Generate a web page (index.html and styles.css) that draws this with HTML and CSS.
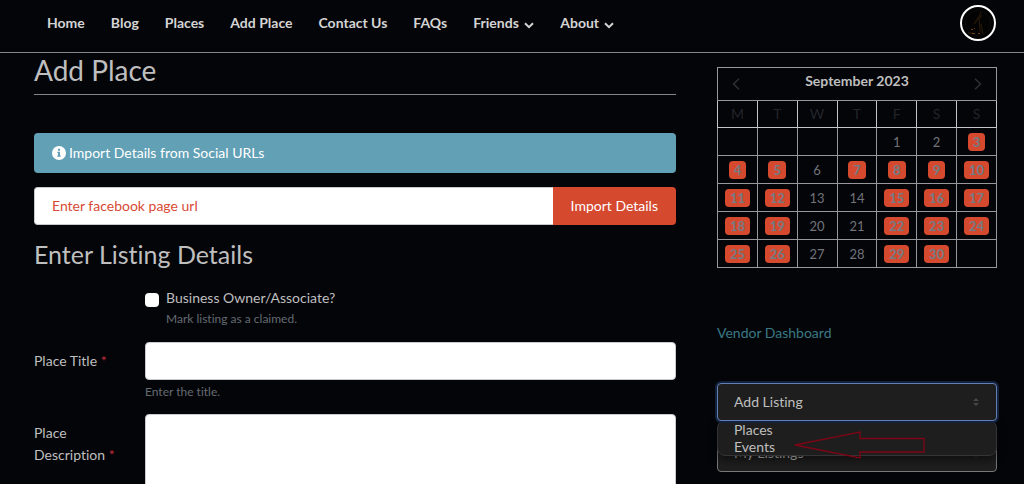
FILE: index.html
```html
<!DOCTYPE html>
<html lang="en">
<head>
<meta charset="utf-8">
<meta name="viewport" content="width=device-width, initial-scale=1">
<title>Add Place</title>
<link rel="stylesheet" href="styles.css">
</head>
<body>
<header class="topbar">
  <nav class="nav" aria-label="Main">
    <a href="#">Home</a>
    <a href="#">Blog</a>
    <a href="#">Places</a>
    <a href="#">Add Place</a>
    <a href="#">Contact Us</a>
    <a href="#">FAQs</a>
    <a href="#">Friends <svg class="chevron" viewBox="0 0 10 7" aria-hidden="true"><path d="M1 1.2 5 5.2 9 1.2"/></svg></a>
    <a href="#">About <svg class="chevron" viewBox="0 0 10 7" aria-hidden="true"><path d="M1 1.2 5 5.2 9 1.2"/></svg></a>
  </nav>
  <a class="avatar" href="#" aria-label="Account">
    <svg viewBox="0 0 32 32" aria-hidden="true">
      <circle cx="16" cy="16" r="12.5" fill="none" stroke="#0d0b0b"/>
      <path d="M19 5l-2 5-5 7M17 10l1 15M20 8l-2 3M19 17l2 10M14 13l3-2M6 26h5" fill="none" stroke="#241608" stroke-width="1.3"/>
      <path d="M9 22h2v1H9zM12 21h1v1h-1zM10 26h3v1h-3zM16 26h2v1h-2z" fill="#76400f"/>
    </svg>
  </a>
</header>
<div class="page">
  <main class="main">
    <h1 class="title">Add Place</h1>
    <div class="notice">
      <svg class="info" viewBox="0 0 14 14" aria-hidden="true"><circle cx="7" cy="7" r="7" fill="#fff"/><path d="M6 2.8h2v1.9H6zM5.3 5.7H8v3.9h.8v1.2H5.2V9.6H6V6.9h-.7z" fill="#62a0b5"/></svg>
      <span>Import Details from Social URLs</span>
    </div>
    <form>
      <div class="import">
        <input class="url" type="text" placeholder="Enter facebook page url" aria-label="Facebook page url">
        <button class="import-button" type="button">Import Details</button>
      </div>
      <h2 class="subtitle">Enter Listing Details</h2>
      <div class="claim">
        <input class="check" type="checkbox" id="owner">
        <div>
          <label for="owner">Business Owner/Associate?</label>
          <p class="hint">Mark listing as a claimed.</p>
        </div>
      </div>
      <div class="field">
        <label class="label" for="place-title">Place Title <span class="required">*</span></label>
        <div>
          <input class="box" type="text" id="place-title">
          <p class="hint">Enter the title.</p>
        </div>
      </div>
      <div class="field">
        <label class="label" for="description">Place Description <span class="required">*</span></label>
        <textarea class="box area" id="description"></textarea>
      </div>
    </form>
  </main>
  <aside class="side">
    <table class="calendar">
      <thead>
        <tr><th class="month" colspan="7"><div class="month-row">
          <button class="arrow" type="button" aria-label="Previous month"><svg viewBox="0 0 8 12" aria-hidden="true"><path d="M7 .7 1.5 6 7 11.3"/></svg></button>
          <span class="month-name">September 2023</span>
          <button class="arrow" type="button" aria-label="Next month"><svg viewBox="0 0 8 12" aria-hidden="true"><path d="M1 .7 6.500 6 1 11.300"/></svg></button>
        </div></th></tr>
        <tr class="days"><th>M</th><th>T</th><th>W</th><th>T</th><th>F</th><th>S</th><th>S</th></tr>
      </thead>
      <tbody>
        <tr><td></td><td></td><td></td><td></td><td>1</td><td>2</td><td><a href="#">3</a></td></tr>
        <tr><td><a href="#">4</a></td><td><a href="#">5</a></td><td>6</td><td><a href="#">7</a></td><td><a href="#">8</a></td><td><a href="#">9</a></td><td><a href="#">10</a></td></tr>
        <tr><td><a href="#">11</a></td><td><a href="#">12</a></td><td>13</td><td>14</td><td><a href="#">15</a></td><td><a href="#">16</a></td><td><a href="#">17</a></td></tr>
        <tr><td><a href="#">18</a></td><td><a href="#">19</a></td><td>20</td><td>21</td><td><a href="#">22</a></td><td><a href="#">23</a></td><td><a href="#">24</a></td></tr>
        <tr><td><a href="#">25</a></td><td><a href="#">26</a></td><td>27</td><td>28</td><td><a href="#">29</a></td><td><a href="#">30</a></td><td></td></tr>
      </tbody>
    </table>
    <a class="vendor" href="#">Vendor Dashboard</a>
    <div class="pickers">
      <div class="picker">
        <select class="select select-open" aria-label="Add Listing"><option>Add Listing</option></select>
        <svg class="sort" viewBox="0 0 6 8" aria-hidden="true"><path d="M3 0 6 3H0zM0 5h6L3 8z"/></svg>
        <ul class="menu">
          <li><a href="#">Places</a></li>
          <li><a href="#">Events</a></li>
        </ul>
        <svg class="pointer" viewBox="0 0 132 28" aria-hidden="true"><path d="M1 14 66 1v6.500h64v13.500H66V27z"/></svg>
      </div>
      <div class="picker">
        <select class="select" aria-label="My Listings"><option>My Listings</option></select>
        <svg class="sort" viewBox="0 0 6 8" aria-hidden="true"><path d="M3 0 6 3H0zM0 5h6L3 8z"/></svg>
      </div>
    </div>
  </aside>
</div>
</body>
</html>
```
FILE: styles.css
```css
* { box-sizing: border-box; }

body {
  margin: 0;
  height: 100vh;
  overflow: hidden;
  background: #040509;
  color: #bfbfbf;
  font: 14px/22px Lato, "Liberation Sans", sans-serif;
  font-variant-ligatures: none;
}

a { color: inherit; text-decoration: none; }
h1, h2, p, ul { margin: 0; padding: 0; font-weight: 400; }
input, select, button, textarea { font: inherit; margin: 0; }

.topbar {
  display: flex;
  align-items: center;
  justify-content: space-between;
  height: 53px;
  padding: 0 28px 6px 47px;
  border-bottom: 1px solid #85868a;
}
.nav { display: flex; gap: 26px; font-weight: 700; color: #d4d4d4; }
.nav a { white-space: nowrap; }
.chevron {
  width: 10px;
  height: 7px;
  margin-left: 2px;
  vertical-align: -1px;
  fill: none;
  stroke: currentColor;
  stroke-width: 2;
}
.avatar {
  width: 36px;
  height: 36px;
  border: 2px solid #fff;
  border-radius: 50%;
  background: #030304;
}
.avatar svg { display: block; }

.page {
  display: grid;
  grid-template-columns: minmax(0, 1fr) 280px;
  gap: 41px;
  padding: 0 27px 0 34px;
}

.title {
  padding-bottom: 7px;
  margin-bottom: 38px;
  border-bottom: 1px solid #85868a;
  font-size: 28px;
  line-height: 34px;
}
.notice {
  display: flex;
  align-items: center;
  gap: 3px;
  height: 40px;
  margin-bottom: 14px;
  padding: 0 18px;
  border-radius: 4px;
  background: #62a0b5;
  color: #fff;
}
.info { width: 14px; height: 14px; }
.import { display: flex; height: 38px; }
.url {
  flex: 1;
  min-width: 0;
  padding: 0 17px;
  border: 1px solid #c8cacd;
  border-right: 0;
  border-radius: 4px 0 0 4px;
  background: #fff;
}
.url::placeholder { color: #d84a35; opacity: 1; }
.import-button {
  padding: 0 18px;
  border: 0;
  border-radius: 0 4px 4px 0;
  background: #d5492f;
  color: #fff;
}
.subtitle { margin: 14px 0 18px; font-size: 25px; line-height: 30px; }

.claim { display: flex; gap: 7px; margin: 0 0 13px 111px; }
.check {
  appearance: none;
  width: 14px;
  height: 14px;
  margin-top: 6px;
  border-radius: 4px;
  background: #fff;
}
.hint { font-size: 12px; line-height: 20px; color: #646b72; }
.field {
  display: grid;
  grid-template-columns: 96px minmax(0, 1fr);
  gap: 15px;
  margin-bottom: 12px;
}
.label { padding-top: 8px; }
.required { color: #c52b38; }
.box {
  display: block;
  width: 100%;
  height: 38px;
  margin-bottom: 2px;
  border: 1px solid #c8cacd;
  border-radius: 4px;
  background: #fff;
}
.area { height: 150px; resize: none; }

.calendar {
  width: 100%;
  margin-top: 14px;
  border-collapse: collapse;
  table-layout: fixed;
  text-align: center;
  color: #71747a;
  font-size: 13px;
  line-height: 18px;
}
.calendar th, .calendar td { height: 28px; padding: 0; border: 1px solid #97979c; }
.calendar .month { height: 33px; color: #bfbfbf; font-size: 14px; }
.month-row { display: flex; align-items: center; justify-content: space-between; padding: 0 14px; }
.month-name { padding-bottom: 6px; }
.arrow { padding: 0; border: 0; background: none; line-height: 0; }
.arrow svg { width: 8px; height: 12px; fill: none; stroke: #2e3034; stroke-width: 1.5; }
.calendar .days th { height: 27px; border-color: #c5c5ca; color: #222429; font-size: 14px; font-weight: 400; }
.calendar a {
  display: inline-block;
  padding: 0 5px;
  border-radius: 4px;
  background: #d5492f;
  color: #737b83;
  font-weight: 700;
}

.vendor { display: inline-block; margin-top: 54px; color: #397985; }
.pickers { display: grid; gap: 13px; margin-top: 39px; }
.picker { position: relative; }
.select {
  appearance: none;
  display: block;
  width: 100%;
  height: 38px;
  padding: 0 16px;
  border: 1px solid #77777a;
  border-radius: 4px;
  background: #1e1e1e;
  color: #bfbfbf;
}
.select-open { border-color: #617fb5; box-shadow: 0 0 0 2px #14213c; }
.sort { position: absolute; top: 15px; right: 18px; width: 6px; height: 8px; fill: #45464a; }
.menu {
  position: absolute;
  z-index: 1;
  top: 37px;
  left: 0;
  right: 0;
  border: 1px solid #343437;
  border-radius: 8px;
  background: #1e1e1e;
  padding: 0 16px;
  line-height: 17px;
  list-style: none;
  box-shadow: 0 4px 8px #00000080;
}
.select-open { position: relative; z-index: 2; }
.picker .sort { z-index: 2; }
.picker:last-child .sort { z-index: 0; }
.pointer {
  position: absolute;
  z-index: 2;
  top: 48px;
  left: 77px;
  width: 132px;
  height: 28px;
  fill: none;
  stroke: #7e0516;
  stroke-width: 1.3;
}
```
